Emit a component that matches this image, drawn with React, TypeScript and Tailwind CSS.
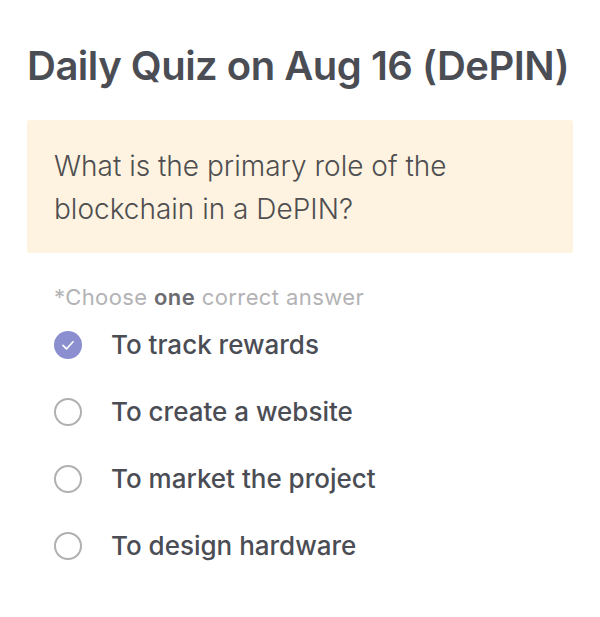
import React, { useState } from 'react';

const options = [
  'To track rewards',
  'To create a website',
  'To market the project',
  'To design hardware',
];

function App() {
  const [selected, setSelected] = useState(0);

  return (
    <div className="min-h-screen bg-white px-[27px] pt-[40px] font-['Inter',sans-serif]">
      <h1 className="whitespace-nowrap text-[40px] font-semibold leading-[52px] tracking-[-0.5px] text-[#4b4d55]">
        Daily Quiz on Aug 16 (DePIN)
      </h1>
      <div className="mt-[28px] rounded-[3px] bg-[#fef3e1] px-[27px] pt-[25px] pb-[22px]">
        <p className="text-[28px] font-light leading-[43px] text-[#4e4e50]">
          What is the primary role of the
          <br />
          blockchain in a DePIN?
        </p>
      </div>
      <div className="px-[27px] pt-[30px]">
        <p className="text-[22px] leading-[28px] tracking-[0.4px] text-[#b3b3b5]">
          *Choose <span className="font-semibold text-[#6b6c72]">one</span> correct answer
        </p>
        <ul className="flex flex-col">
          {options.map((opt, i) => (
            <li key={opt}>
              <button
                onClick={() => setSelected(i)}
                className="flex h-[67px] items-center gap-[29px] text-left"
              >
                {selected === i ? (
                  <span className="flex h-[28px] w-[28px] shrink-0 items-center justify-center rounded-full bg-[#8b8fd0]">
                    <svg className="h-[22px] w-[22px]" viewBox="0 0 24 24" fill="none" stroke="white" strokeWidth="1.8" strokeLinecap="round" strokeLinejoin="round">
                      <path d="M6.5 12.5l3.8 3.8L17.5 8.5" />
                    </svg>
                  </span>
                ) : (
                  <span className="h-[28px] w-[28px] shrink-0 rounded-full border-[2px] border-[#b0b0b2]" />
                )}
                <span className="text-[26px] font-medium text-[#4b4d55]">{opt}</span>
              </button>
            </li>
          ))}
        </ul>
      </div>
    </div>
  );
}

export default App;
